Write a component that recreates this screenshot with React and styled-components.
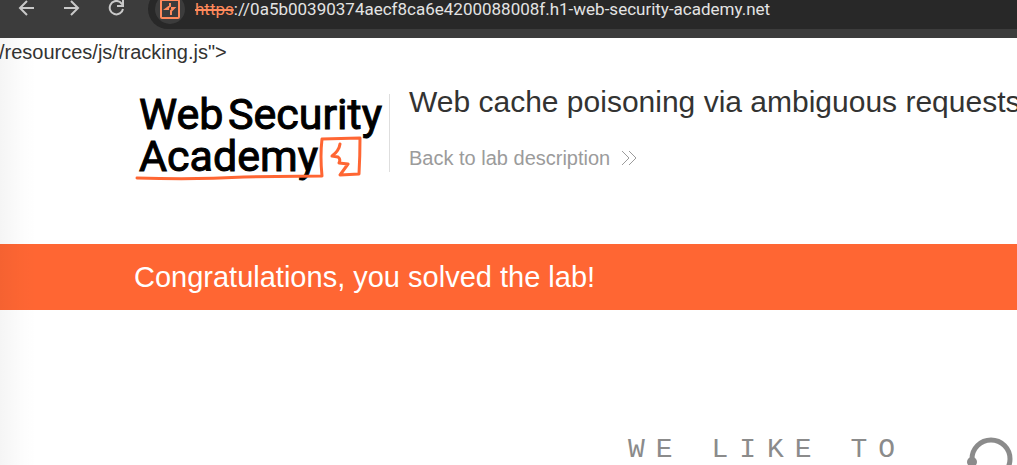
import React from "react";
import styled, { createGlobalStyle } from "styled-components";

const GlobalStyle = createGlobalStyle`
  * { box-sizing: border-box; }
  html { height: 100%; overflow: hidden; }
  body {
    margin: 0;
    height: 100%;
    overflow: hidden;
    background: #ffffff;
    color: #333332;
    font-family: "Liberation Sans", Arial, sans-serif;
  }
  #root { height: 100%; }
`;

const Window = styled.div`
  height: 100%;
  display: flex;
  flex-direction: column;
`;

const Toolbar = styled.header`
  flex: none;
  display: flex;
  align-items: flex-start;
  height: 38px;
  padding-left: 16px;
  overflow: hidden;
  background: #3c3c3c;
`;

const NavButtons = styled.nav`
  display: flex;
  gap: 24px;
  margin-right: 21px;
`;

const NavButton = styled.button`
  display: flex;
  width: 21px;
  height: 18px;
  padding: 0;
  border: 0;
  background: none;
  color: #c9c9c9;

  svg { flex: none; }
`;

const AddressBar = styled.div`
  flex: 1;
  display: flex;
  align-items: center;
  gap: 10px;
  height: 40px;
  margin-top: -11px;
  padding-left: 7px;
  border-radius: 20px 0 0 20px;
  background: #282828;
`;

const SiteBadge = styled.span`
  flex: none;
  display: grid;
  place-items: center;
  width: 30px;
  height: 30px;
  border-radius: 50%;
  background: #3c3c3c;
`;

const Address = styled.div`
  color: #e3e3e3;
  font: 17px/24px Roboto, "Noto Sans", sans-serif;
  white-space: nowrap;
`;

const Scheme = styled.s`
  color: #ff8a5c;
  text-decoration-thickness: 2px;
`;

const Page = styled.main`
  flex: 1;
  min-height: 0;
  overflow: hidden;
  position: relative;

  &::before {
    content: "";
    position: absolute;
    inset: 0 auto 0 0;
    width: 36px;
    background: linear-gradient(90deg, rgba(0, 0, 0, 0.04), rgba(0, 0, 0, 0.01) 60%, rgba(0, 0, 0, 0));
    z-index: 1;
    pointer-events: none;
  }
`;

const Leftover = styled.p`
  margin: 0;
  text-indent: -1px;
  font-size: 20px;
  line-height: 28px;
`;

const LabHeader = styled.section`
  display: flex;
  height: 178px;
  padding: 16px 0 0 134px;
`;

const Logo = styled.svg`
  flex: none;
  display: block;
  margin-top: 6px;
`;

const LabInfo = styled.div`
  flex: none;
  height: 78px;
  margin: 12px 0 0 3px;
  padding-left: 19px;
  border-left: 1px solid #dedede;
`;

const Title = styled.h1`
  margin: -10px 0 0;
  font-size: 30px;
  line-height: 36px;
  font-weight: 400;
  white-space: nowrap;
`;

const BackLink = styled.a`
  display: inline-flex;
  align-items: center;
  gap: 11px;
  margin-top: 26px;
  color: #9b9b9b;
  font-size: 20px;
  line-height: 24px;
  text-decoration: none;
`;

const Banner = styled.section`
  display: flex;
  align-items: center;
  height: 66px;
  padding-left: 134px;
  background: #ff6633;
`;

const BannerText = styled.h2`
  margin: 0;
  color: #ffffff;
  font-size: 29px;
  line-height: 36px;
  font-weight: 400;
`;

const ShopHeading = styled.section`
  display: flex;
  align-items: flex-start;
  justify-content: flex-end;
  gap: 61px;
  padding: 122px 4px 0 0;
`;

const Slogan = styled.p`
  margin: 0;
  color: #8b8b8b;
  font: 28px/36px "Liberation Mono", monospace;
  letter-spacing: 11px;
  white-space: nowrap;
`;

function AcademyLogo() {
  return (
    <Logo width="252" height="96" viewBox="0 0 252 96" role="img" aria-label="Web Security Academy">
      <g
        fill="#000"
        stroke="#000"
        strokeWidth="1"
        fontFamily="Roboto, sans-serif"
        fontWeight="400"
        fontSize="43"
      >
        <text x="5" y="41">Web</text>
        <text x="94" y="41">Security</text>
        <text x="5" y="83">Academy</text>
      </g>
      <g fill="none" stroke="#ff6633" strokeLinejoin="round" strokeLinecap="round" strokeWidth="3">
        <path d="M3 90 Q60 92 110 89 L188 88 Q186 68 188 51 L226 50 Q226 68 225 86 L206 87 L214 76 L205 75 Q207 71 204 69 L198 68 Q205 63 206 56" />
      </g>
    </Logo>
  );
}

export default function App() {
  return (
    <>
      <GlobalStyle />
      <Window>
        <Toolbar>
          <NavButtons>
            <NavButton aria-label="Back">
              <svg width="21" height="18" viewBox="0 0 21 18" fill="none" stroke="currentColor" strokeWidth="2">
                <path d="M18 8 H4 M11 1 L4 8 L11 15" />
              </svg>
            </NavButton>
            <NavButton aria-label="Forward">
              <svg width="21" height="18" viewBox="0 0 21 18" fill="none" stroke="currentColor" strokeWidth="2">
                <path d="M3 8 H17 M10 1 L17 8 L10 15" />
              </svg>
            </NavButton>
            <NavButton aria-label="Reload">
              <svg width="21" height="18" viewBox="0 0 21 18" fill="none" stroke="currentColor" strokeWidth="2">
                <path d="M17 9 A6.7 6.7 0 1 1 14 2 L17 5 M17 0 V6 H11" />
              </svg>
            </NavButton>
          </NavButtons>
          <AddressBar>
            <SiteBadge>
              <svg width="20" height="20" viewBox="0 0 20 20" fill="none" stroke="#ff8a5c">
                <rect x="1" y="1" width="18" height="18" rx="1" strokeWidth="2" />
                <path d="M10 4 V7 L6 10 H9 M11 9 H14 L11 12 V16" strokeWidth="2" />
              </svg>
            </SiteBadge>
            <Address>
              <Scheme>https</Scheme>://0a5b00390374aecf8ca6e4200088008f.h1-web-security-academy.net
            </Address>
          </AddressBar>
        </Toolbar>
        <Page>
          <Leftover>/resources/js/tracking.js"&gt;</Leftover>
          <LabHeader>
            <AcademyLogo />
            <LabInfo>
              <Title>Web cache poisoning via ambiguous requests</Title>
              <BackLink href="#lab">
                Back to lab description
                <svg width="16" height="16" viewBox="0 0 16 16" fill="none" stroke="currentColor">
                  <path d="M1 1 L8 8 L1 15 M8 1 L15 8 L8 15" />
                </svg>
              </BackLink>
            </LabInfo>
          </LabHeader>
          <Banner>
            <BannerText>Congratulations, you solved the lab!</BannerText>
          </Banner>
          <ShopHeading>
            <Slogan>WE LIKE TO</Slogan>
            <svg width="46" height="46" viewBox="0 0 46 46" aria-hidden="true">
              <circle cx="24" cy="27" r="19" fill="none" stroke="#8b8b8b" strokeWidth="5" />
              <circle cx="5" cy="30" r="5" fill="#8b8b8b" />
            </svg>
          </ShopHeading>
        </Page>
      </Window>
    </>
  );
}
